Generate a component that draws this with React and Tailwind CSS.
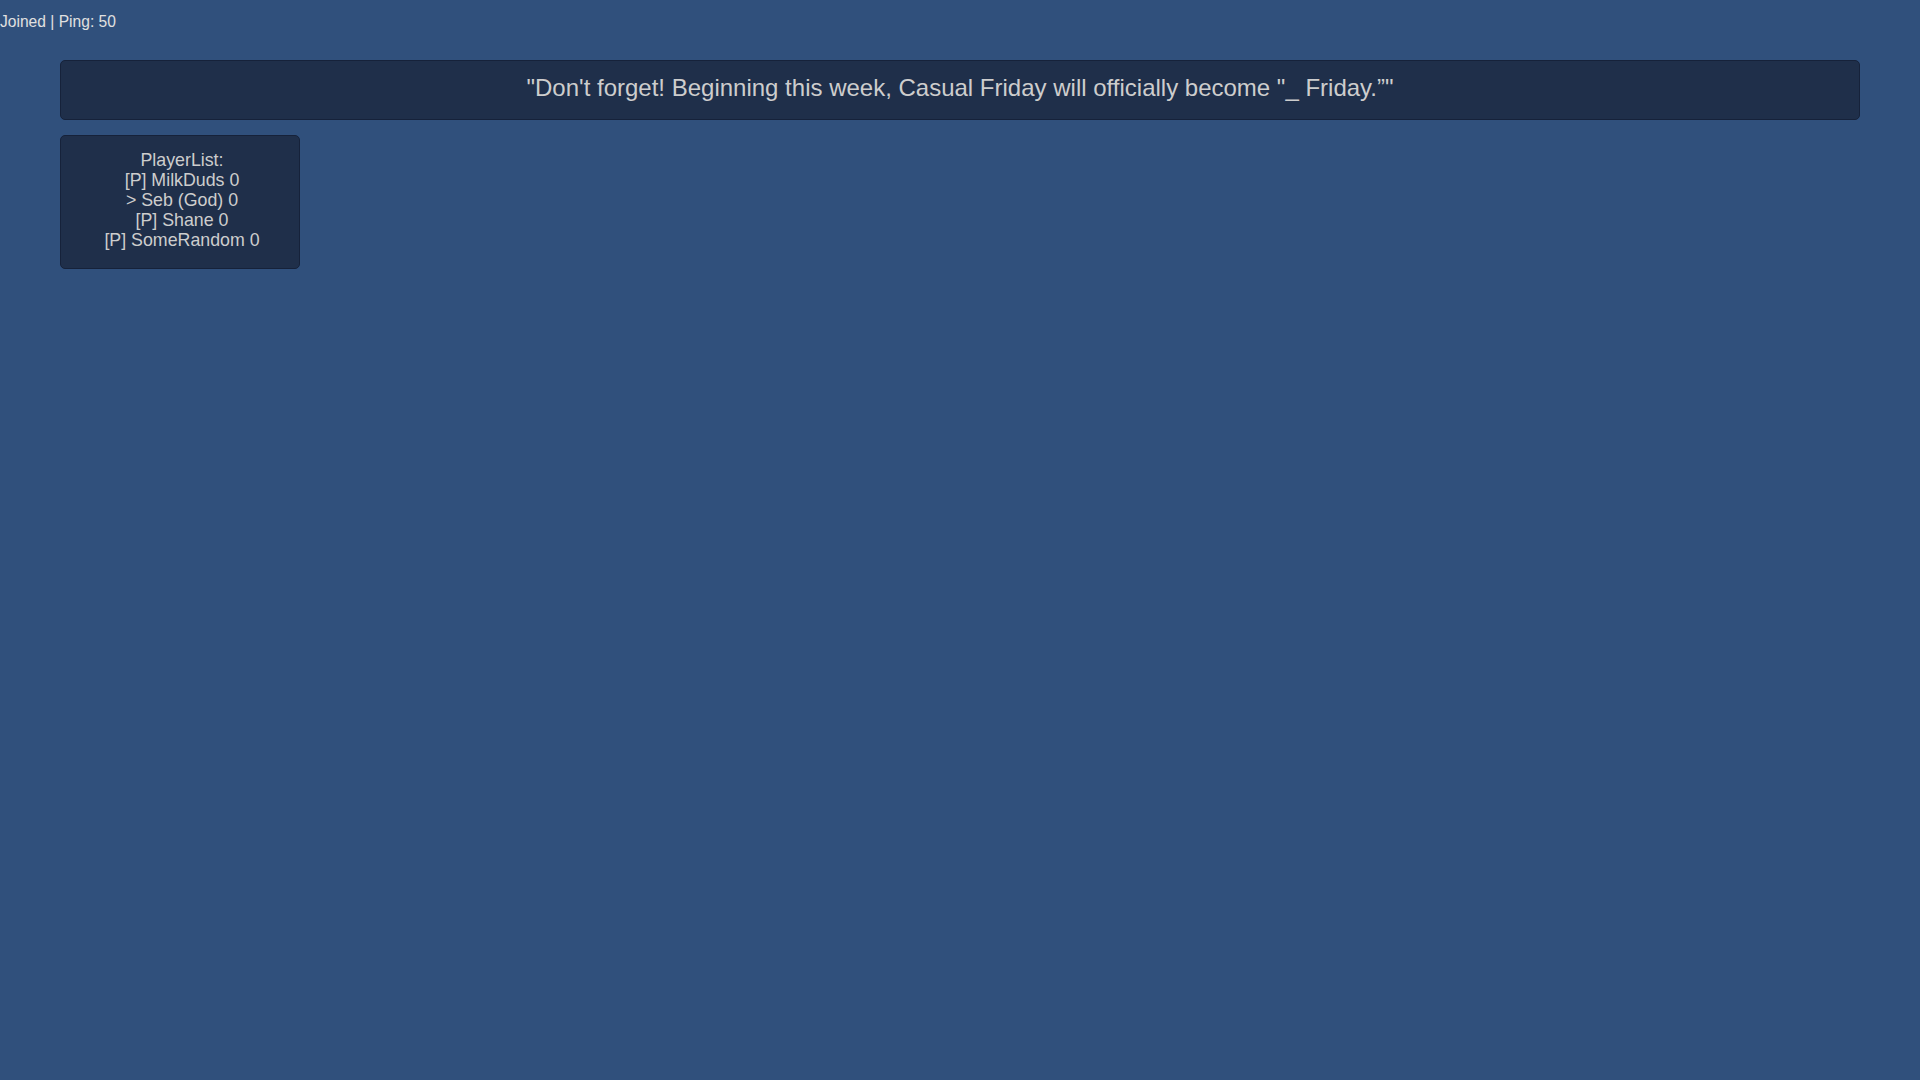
export default function App() {
  return (
    <div
      className="w-[1920px] h-[1080px] bg-[#30507c] text-[#d2d2d2] relative overflow-hidden"
      style={{ fontFamily: '"Liberation Sans", Arial, sans-serif' }}
    >
      <div className="h-[42px] pt-[13px] pl-0 text-[15.6px] leading-[18px] text-[#e0e0e0]">
        Joined | Ping: 50
      </div>
      <div className="px-[60px] pt-[18px]">
        <div className="h-[60px] w-[1800px] rounded-[5px] border border-[#16223a] bg-[#1f2f4a] flex items-center justify-center pb-[5px] text-[24px] text-[#cdcdcd]">
          "Don't forget! Beginning this week, Casual Friday will officially become "_ Friday.”"
        </div>
        <div className="mt-[15px] w-[240px] h-[134px] rounded-[5px] border border-[#16223a] bg-[#1f2f4a] pt-[14px] pl-[4px] text-center text-[17.8px] leading-[20px] text-[#cdcdcd]">
          <div>PlayerList:</div>
          <div>[P] MilkDuds 0</div>
          <div>&gt; Seb (God) 0</div>
          <div>[P] Shane 0</div>
          <div>[P] SomeRandom 0</div>
        </div>
      </div>
    </div>
  );
}
